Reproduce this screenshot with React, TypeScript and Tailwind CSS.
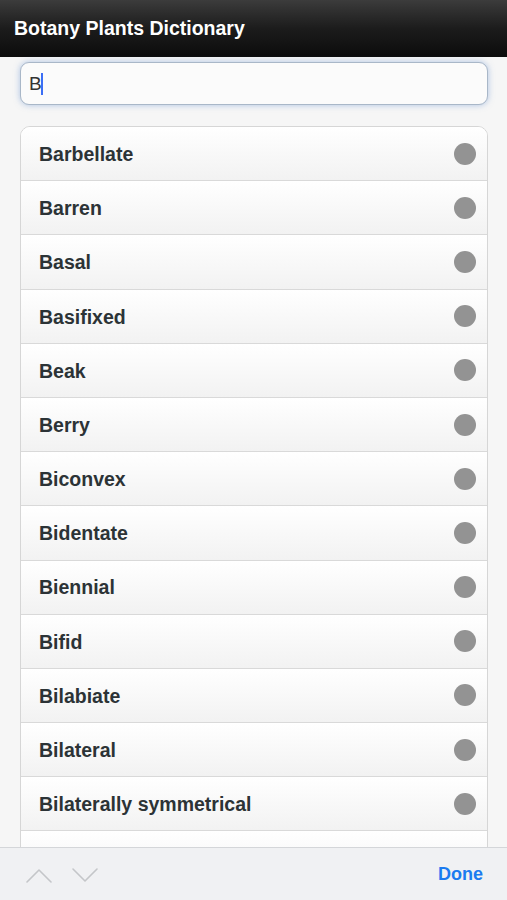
const TERMS = [
  "Barbellate",
  "Barren",
  "Basal",
  "Basifixed",
  "Beak",
  "Berry",
  "Biconvex",
  "Bidentate",
  "Biennial",
  "Bifid",
  "Bilabiate",
  "Bilateral",
  "Bilaterally symmetrical",
  "Bipinnate",
];

function Chevron({ up }: { up?: boolean }) {
  return (
    <svg width="28" height="16" viewBox="0 0 28 16" fill="none">
      <path
        d={up ? "M2 15 L14 3 L26 15" : "M2 2 L14 14 L26 2"}
        stroke="#c4c6c9"
        strokeWidth="1.6"
        strokeLinecap="round"
        strokeLinejoin="round"
      />
    </svg>
  );
}

export default function App() {
  return (
    <div className="relative h-[900px] w-full overflow-hidden bg-[#f6f6f6] font-['Liberation_Sans',Arial,sans-serif]">
      <header className="flex h-[57px] items-center bg-gradient-to-b from-[#3c3c3c] via-[#1c1c1c] to-[#0c0c0c] px-[14px] pt-[1px]">
        <h1 className="text-[19.5px] font-bold text-white">Botany Plants Dictionary</h1>
      </header>

      <div className="pl-[20px] pr-[19px] pt-[5px]">
        {/* search field, focused with caret after the typed letter */}
        <div className="flex h-[43px] items-center rounded-[9px] border border-[#a9b7c8] bg-[#fbfbfb] px-[8px] shadow-[0_0_6px_rgba(110,150,210,0.55)]">
          <span className="text-[19px] leading-none text-[#333]">B</span>
          <span className="ml-[-1px] h-[22px] w-[2px] bg-[#3b6ef5]" />
        </div>

        <ul className="mt-[21px] overflow-hidden rounded-t-[10px] border border-[#d6d6d6] bg-white">
          {TERMS.map((t) => (
            <li
              key={t}
              className="flex h-[54.2px] items-center justify-between border-b border-[#d9d9d9] bg-gradient-to-b from-white to-[#f2f2f2] pl-[18px] pr-[11px] pt-[2px]"
            >
              <span className="text-[19.5px] font-bold text-[#2c3336]">{t}</span>
              <span className="mt-[-2px] h-[22px] w-[22px] rounded-full bg-[#939393]" />
            </li>
          ))}
        </ul>
      </div>

      <footer className="absolute inset-x-0 bottom-0 flex h-[53px] items-center justify-between border-t border-[#d4d6d9] bg-[#f0f1f3] pl-[25px] pr-[24px]">
        <div className="flex items-center gap-[18px] pt-[1px]">
          <Chevron up />
          <Chevron />
        </div>
        <button type="button" className="text-[18px] font-bold text-[#1b7bf0]">
          Done
        </button>
      </footer>
    </div>
  );
}
